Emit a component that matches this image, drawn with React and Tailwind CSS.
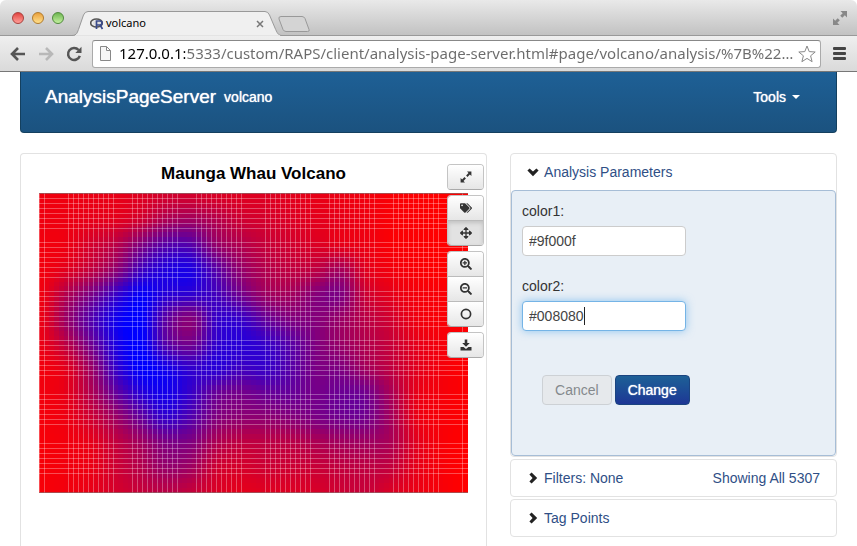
import { useState } from "react";
import clsx from "clsx";
import { FaArrowsAlt, FaSearchMinus, FaSearchPlus, FaTags } from "react-icons/fa";

const URL_TEXT = "127.0.0.1:5333/custom/RAPS/client/analysis-page-server.html#page/volcano/analysis/%7B%22…";

const ELEVATION = [
  [0.06, 0.06, 0.08, 0.09, 0.13, 0.18, 0.18, 0.15, 0.13, 0.13, 0.11, 0.09, 0.07, 0.05, 0.02, 0.01, 0, 0],
  [0.06, 0.07, 0.1, 0.12, 0.2, 0.34, 0.38, 0.3, 0.2, 0.17, 0.14, 0.11, 0.09, 0.06, 0.02, 0.01, 0, 0],
  [0.05, 0.07, 0.17, 0.28, 0.5, 0.66, 0.66, 0.42, 0.3, 0.22, 0.18, 0.14, 0.1, 0.07, 0.02, 0.01, 0, 0],
  [0.05, 0.12, 0.25, 0.45, 0.75, 0.87, 0.88, 0.66, 0.42, 0.3, 0.25, 0.26, 0.35, 0.12, 0.05, 0.02, 0, 0],
  [0.06, 0.3, 0.52, 0.78, 0.97, 0.85, 0.82, 0.74, 0.55, 0.38, 0.36, 0.47, 0.5, 0.2, 0.1, 0.04, 0.02, 0],
  [0.08, 0.4, 0.68, 0.93, 1, 0.64, 0.48, 0.78, 0.78, 0.6, 0.5, 0.48, 0.4, 0.27, 0.18, 0.06, 0.02, 0.01],
  [0.08, 0.28, 0.58, 0.9, 1, 0.66, 0.55, 0.8, 0.84, 0.78, 0.65, 0.5, 0.4, 0.3, 0.22, 0.1, 0.04, 0.01],
  [0.05, 0.12, 0.4, 0.8, 1, 0.92, 0.8, 0.84, 0.76, 0.78, 0.66, 0.52, 0.5, 0.36, 0.25, 0.12, 0.04, 0.01],
  [0.05, 0.1, 0.32, 0.62, 0.85, 0.92, 0.78, 0.6, 0.55, 0.6, 0.6, 0.54, 0.58, 0.55, 0.34, 0.1, 0.04, 0.01],
  [0.04, 0.07, 0.2, 0.4, 0.62, 0.8, 0.68, 0.5, 0.45, 0.45, 0.48, 0.52, 0.56, 0.55, 0.36, 0.09, 0.03, 0.01],
  [0.03, 0.05, 0.1, 0.25, 0.38, 0.52, 0.5, 0.33, 0.26, 0.27, 0.28, 0.33, 0.37, 0.38, 0.33, 0.12, 0.03, 0],
  [0.03, 0.05, 0.08, 0.2, 0.3, 0.42, 0.38, 0.2, 0.17, 0.2, 0.2, 0.22, 0.25, 0.26, 0.24, 0.1, 0.03, 0],
  [0.03, 0.05, 0.09, 0.17, 0.23, 0.28, 0.24, 0.15, 0.11, 0.13, 0.14, 0.16, 0.2, 0.22, 0.15, 0.08, 0.03, 0],
];

const PLOT_W = 429;
const PLOT_H = 300;
const COLS = 87;
const ROWS = 61;

// [first line, number of lines], lines are 5 units apart
const V_LINES = [[0, 2], [29, 10], [93, 10], [157, 10], [226, 10], [290, 10], [354, 10], [423, 1]];
const H_LINES = [[5, 7], [49, 8], [98, 8], [147, 8], [201, 7], [250, 7]];

const spread = (groups) => groups.flatMap(([start, n]) => Array.from({ length: n }, (_, i) => start + i * 5));

// Catmull-Rom through four neighbouring samples
const cubic = (a, b, c, d, f) =>
  b + 0.5 * f * (c - a + f * (2 * a - 5 * b + 4 * c - d + f * (3 * (b - c) + d - a)));

const at = (list, i) => list[Math.max(0, Math.min(list.length - 1, i))];

function sample(u, v) {
  const x = u * (ELEVATION[0].length - 1);
  const y = v * (ELEVATION.length - 1);
  const x0 = Math.floor(x);
  const y0 = Math.floor(y);
  const [a, b, c, d] = [-1, 0, 1, 2].map((dy) => {
    const row = at(ELEVATION, y0 + dy);
    return cubic(at(row, x0 - 1), at(row, x0), at(row, x0 + 1), at(row, x0 + 2), x - x0);
  });
  return Math.max(0, Math.min(1, cubic(a, b, c, d, y - y0)));
}

const CELLS = Array.from({ length: COLS * ROWS }, (_, i) => {
  const col = i % COLS;
  const row = Math.floor(i / COLS);
  const t = sample(col / (COLS - 1), row / (ROWS - 1));
  const x = Math.round((col * PLOT_W) / COLS);
  const y = Math.round((row * PLOT_H) / ROWS);
  return {
    x,
    y,
    w: Math.round(((col + 1) * PLOT_W) / COLS) - x,
    h: Math.round(((row + 1) * PLOT_H) / ROWS) - y,
    fill: `rgb(${Math.round(255 * (1 - t))},0,${Math.round(255 * t)})`,
  };
});

function VolcanoPlot() {
  return (
    <svg viewBox={`0 0 ${PLOT_W} ${PLOT_H}`} className="block w-full" role="img" aria-label="Elevation heatmap">
      <g shapeRendering="crispEdges">
        {CELLS.map((c, i) => (
          <rect key={i} x={c.x} y={c.y} width={c.w} height={c.h} fill={c.fill} />
        ))}
        {spread(V_LINES).map((x) => (
          <rect key={x} x={x} y="0" width="1" height={PLOT_H} fill="#fff" opacity="0.3" />
        ))}
        {spread(H_LINES).map((y) => (
          <rect key={y} x="0" y={y} width={PLOT_W} height="1" fill="#fff" opacity="0.3" />
        ))}
        <rect x="0" y="0" width={PLOT_W} height="1" fill="#8a6a6a" opacity="0.7" />
        <rect x="0" y={PLOT_H - 1} width={PLOT_W} height="1" fill="#8a6a6a" opacity="0.7" />
      </g>
    </svg>
  );
}

function ResizeIcon() {
  return (
    <svg width="12" height="12" viewBox="0 0 12 12" fill="#333">
      <path d="M7 0.600H11.400V5L9.900 3.500L7.500 5.900L6.100 4.500L8.500 2.100Z" />
      <path d="M0.600 7L2.100 8.500L4.500 6.100L5.900 7.500L3.500 9.900L5 11.400H0.600Z" />
    </svg>
  );
}

function CircleIcon() {
  return (
    <svg width="12" height="12" viewBox="0 0 12 12" fill="none" stroke="#333" strokeWidth="1.700">
      <circle cx="6" cy="6" r="4.600" />
    </svg>
  );
}

function DownloadIcon() {
  return (
    <svg width="12" height="12" viewBox="0 0 12 12" fill="#333">
      <path d="M4.700 0.500H7.300V4H9.800L6 7.800L2.200 4H4.700Z" />
      <path d="M0.500 8H3.600L6 9.900L8.400 8H11.500V11.500H0.500Z" />
    </svg>
  );
}

function Chevron({ open }) {
  return (
    <svg width="12" height="12" viewBox="0 0 12 12" className="shrink-0" fill="#222">
      {open ? (
        <path d="M0.400 4.600L2.600 2.400L6 5.600L9.400 2.400L11.600 4.600L6 10.200Z" />
      ) : (
        <path d="M4.600 0.400L2.400 2.600L5.600 6L2.400 9.400L4.600 11.600L10.200 6Z" />
      )}
    </svg>
  );
}

const TOOL_GROUPS = [
  [{ label: "Full size", Icon: ResizeIcon }],
  [
    { label: "Tag", Icon: FaTags },
    { label: "Pan", Icon: FaArrowsAlt, active: true },
  ],
  [
    { label: "Zoom in", Icon: FaSearchPlus },
    { label: "Zoom out", Icon: FaSearchMinus },
    { label: "Reset zoom", Icon: CircleIcon },
  ],
  [{ label: "Download", Icon: DownloadIcon }],
];

function PlotTools() {
  return (
    <div className="absolute right-0.5 top-2.5 flex flex-col gap-[5px]">
      {TOOL_GROUPS.map((group) => (
        <div key={group[0].label} className="flex flex-col overflow-hidden rounded border border-[#c4c4c4] border-b-[#aaa]">
          {group.map(({ label, Icon, active }, i) => (
            <button
              key={label}
              type="button"
              aria-label={label}
              className={clsx(
                "grid w-[35px] place-items-center text-[#333]",
                i > 0 ? "h-[25px]" : "h-6",
                i > 0 && "border-t border-[#bbb]",
                active ? "bg-[#e2e2e2] shadow-[inset_0_2px_4px_rgba(0,0,0,0.15)]" : "bg-linear-to-b from-white to-[#e6e6e6]"
              )}
            >
              <Icon size={12} />
            </button>
          ))}
        </div>
      ))}
    </div>
  );
}

const LIGHTS = [
  { label: "Close", ring: "border-[#a8403c]", fill: "bg-linear-to-b from-[#e0403f] to-[#ff9d98]" },
  { label: "Minimize", ring: "border-[#b07a2c]", fill: "bg-linear-to-b from-[#e9a03a] to-[#ffe08a]" },
  { label: "Zoom", ring: "border-[#4f8a3c]", fill: "bg-linear-to-b from-[#6db650] to-[#c4f0a0]" },
];

function TabStrip() {
  return (
    <div className="flex h-9 items-end rounded-t-md border-b border-[#999] bg-linear-to-b from-[#e9e9e9] to-[#c2c2c2]">
      <div className="flex gap-2 self-center pl-3">
        {LIGHTS.map(({ label, ring, fill }) => (
          <button key={label} type="button" aria-label={label} className={clsx("size-3 rounded-full border", ring, fill)} />
        ))}
      </div>
      <div className="relative ml-2 -mb-px flex h-[25px] w-[210px] items-center pl-[18px] pr-[18px]">
        <svg viewBox="0 0 210 25" className="absolute inset-0 size-full" fill="none">
          <path d="M0 24.500C5 24.500 5.500 21 7 17L11.500 4Q13 0.500 16 0.500H193Q196 0.500 197.500 4L203 17C205 21.500 206 24.500 210 24.500" fill="#f0f0f0" stroke="#999" />
          <path d="M3 25H208" stroke="#efefef" strokeWidth="1.500" />
        </svg>
        <svg width="14" height="12" viewBox="0 0 14 12" className="relative" fill="none">
          <ellipse cx="6.500" cy="5" rx="5.800" ry="4" stroke="#555" strokeWidth="1.600" />
          <ellipse cx="7" cy="5" rx="4" ry="2.600" fill="#ddd" />
          <path d="M6.500 11V3H10Q12 3 12 5Q12 7 10 7H7M10 7L12.500 11" stroke="#3a4a8a" strokeWidth="1.700" />
        </svg>
        <span className="relative ml-0.5 grow text-[11px] text-black">volcano</span>
        <button type="button" aria-label="Close tab" className="relative">
          <svg width="8" height="8" viewBox="0 0 8 8" stroke="#777" strokeWidth="1.500">
            <path d="M1 1L7 7M7 1L1 7" />
          </svg>
        </button>
      </div>
      <button type="button" aria-label="New tab" className="-ml-1 mb-0.5">
        <svg width="32" height="17" viewBox="0 0 32 17" fill="#d4d4d4" stroke="#999">
          <path d="M3 0.500H24Q26 0.500 27 2.500L31 13.500Q32 15.500 29.500 15.500H8Q6 15.500 5 13.500L1 3Q0.300 0.500 3 0.500Z" />
        </svg>
      </button>
      <button type="button" aria-label="Full screen" className="ml-auto mr-2.5 self-center">
        <svg width="14" height="14" viewBox="0 0 14 14" fill="#888">
          <path d="M7.500 0H14V6.500L11.800 4.300L9.300 6.800L7.200 4.700L9.700 2.200Z" />
          <path d="M0 7.500L2.200 9.700L4.700 7.200L6.800 9.300L4.300 11.800L6.500 14H0Z" />
        </svg>
      </button>
    </div>
  );
}

function AddressRow() {
  return (
    <div className="flex h-9 items-center border-b border-[#777] bg-linear-to-b from-[#efefef] to-[#dadada] pl-2.5 pr-2.5">
      <button type="button" aria-label="Back">
        <svg width="16" height="14" viewBox="0 0 16 14" fill="none" stroke="#555" strokeWidth="2.600">
          <path d="M15 7H2M8 1L2 7L8 13" />
        </svg>
      </button>
      <button type="button" aria-label="Forward" className="ml-3">
        <svg width="16" height="14" viewBox="0 0 16 14" fill="none" stroke="#b8b8b8" strokeWidth="2.600">
          <path d="M1 7H14M8 1L14 7L8 13" />
        </svg>
      </button>
      <button type="button" aria-label="Reload" className="ml-3">
        <svg width="16" height="16" viewBox="0 0 16 16" fill="none">
          <path d="M12.600 4A6 6 0 1 0 13.800 9.800" stroke="#555" strokeWidth="2.500" />
          <path d="M15.500 0.800V7H9.300Z" fill="#555" />
        </svg>
      </button>
      <div className="ml-2.5 flex h-7 grow items-center rounded-[3px] border border-[#aaa] border-t-[#888] bg-white pl-[7px] pr-1">
        <svg width="11" height="15" viewBox="0 0 11 15" className="shrink-0" fill="#f6f6f6" stroke="#888">
          <path d="M0.500 0.500H6.500L10.500 4.500V14.500H0.500ZM6.500 0.500V4.500H10.500" />
        </svg>
        <input
          aria-label="Address"
          defaultValue={URL_TEXT}
          className="ml-2 min-w-0 grow bg-[linear-gradient(to_right,#000_66px,#6b6b6b_66px)] bg-clip-text text-[15px] text-transparent outline-none"
        />
        <button type="button" aria-label="Bookmark" className="shrink-0">
          <svg width="18" height="18" viewBox="0 0 18 18" fill="#fff" stroke="#888" strokeLinejoin="round">
            <path d="M9 1L11.200 6.600L17.200 7L12.600 10.800L14.100 16.700L9 13.400L3.900 16.700L5.400 10.800L0.800 7L6.800 6.600Z" />
          </svg>
        </button>
      </div>
      <button type="button" aria-label="Menu" className="ml-3">
        <svg width="14" height="14" viewBox="0 0 14 14" fill="#444">
          <rect y="0" width="13" height="3" rx="1" />
          <rect y="5" width="13" height="3" rx="1" />
          <rect y="10" width="13" height="3" rx="1" />
        </svg>
      </button>
    </div>
  );
}

function Navbar() {
  return (
    <nav className="mx-5 flex h-[61px] items-center rounded-b border border-t-0 border-[#14405f] bg-linear-to-b from-[#1e6096] to-[#1b527f] pb-2.5 pl-6 pr-9 text-white">
      <a href="#page" className="text-[19px] [text-shadow:0_0_1px_#fff]">AnalysisPageServer</a>
      <a href="#page/volcano" className="ml-2 text-sm [text-shadow:0_0_1px_#fff]">volcano</a>
      <button type="button" className="ml-auto flex items-center gap-1.5 text-sm [text-shadow:0_0_1px_#fff]">
        Tools
        <span className="border-x-4 border-t-4 border-x-transparent border-t-white" />
      </button>
    </nav>
  );
}

function Field({ id, label, value, onChange, focused }) {
  return (
    <div>
      <label htmlFor={id} className="block text-sm leading-5 text-[#333]">
        {label}
      </label>
      <div className="relative mt-[5px] w-[164px]">
        <input
          id={id}
          value={value}
          onChange={(e) => onChange(e.target.value)}
          className={clsx(
            "h-[30px] w-full rounded border bg-white px-1.5 text-sm text-[#444] outline-none",
            focused ? "border-[#75b4e6] shadow-[0_0_8px_rgba(82,168,236,0.6)]" : "border-[#ccc]"
          )}
        />
        {focused && (
          <span className="pointer-events-none absolute inset-y-0 left-[7px] flex items-center text-sm">
            <span className="invisible">{value}</span>
            <span className="h-[18px] w-px bg-[#222]" />
          </span>
        )}
      </div>
    </div>
  );
}

const PANEL_HEAD = "flex h-9 w-full items-center gap-[5px] pl-4 pr-4 text-sm text-[#2f4f86]";

export default function App() {
  const [color1, setColor1] = useState("#9f000f");
  const [color2, setColor2] = useState("#008080");

  return (
    <div className="flex min-h-screen flex-col bg-white font-['Liberation_Sans',Arial,sans-serif]">
      <header className="font-['Lucida_Grande','Noto_Sans',sans-serif]">
        <TabStrip />
        <AddressRow />
      </header>
      <Navbar />

      <main className="mx-5 mt-5 grid grow grid-cols-[10fr_7fr] gap-[23px]">
        <section className="relative rounded-t border border-b-0 border-[#e2e2e2] px-[18px] pt-2.5">
          <h1 className="mb-[9px] text-center text-[17px] font-bold leading-5 text-black">Maunga Whau Volcano</h1>
          <VolcanoPlot />
          <PlotTools />
        </section>

        <aside className="flex flex-col gap-0.5">
          <section className="rounded border border-[#e2e2e2]">
            <button type="button" className={PANEL_HEAD}>
              <Chevron open />
              <span>Analysis Parameters</span>
            </button>
            <form className="rounded border border-[#a6bdd6] bg-[#e8eff6] px-2.5 pb-[50px] pt-2.5" onSubmit={(e) => e.preventDefault()}>
              <div className="flex flex-col gap-5">
                <Field id="color1" label="color1:" value={color1} onChange={setColor1} />
                <Field id="color2" label="color2:" value={color2} onChange={setColor2} focused />
              </div>
              <div className="ml-5 mt-11 flex gap-[3px]">
                <button type="button" disabled className="h-[30px] rounded border border-[#cdd1d5] bg-[#e6e9ec] px-3 text-sm text-[#85898d]">
                  Cancel
                </button>
                <button type="submit" className="h-[30px] rounded border border-[#1b4480] bg-linear-to-b from-[#1e6096] to-[#1e3695] px-3 text-sm text-white [text-shadow:0_0_1px_#fff]">
                  Change
                </button>
              </div>
            </form>
          </section>
          <section className="rounded border border-[#e2e2e2]">
            <button type="button" className={PANEL_HEAD}>
              <Chevron />
              <span>Filters: None</span>
              <span className="ml-auto">Showing All 5307</span>
            </button>
          </section>
          <section className="rounded border border-[#e2e2e2]">
            <button type="button" className={PANEL_HEAD}>
              <Chevron />
              <span>Tag Points</span>
            </button>
          </section>
        </aside>
      </main>
    </div>
  );
}
